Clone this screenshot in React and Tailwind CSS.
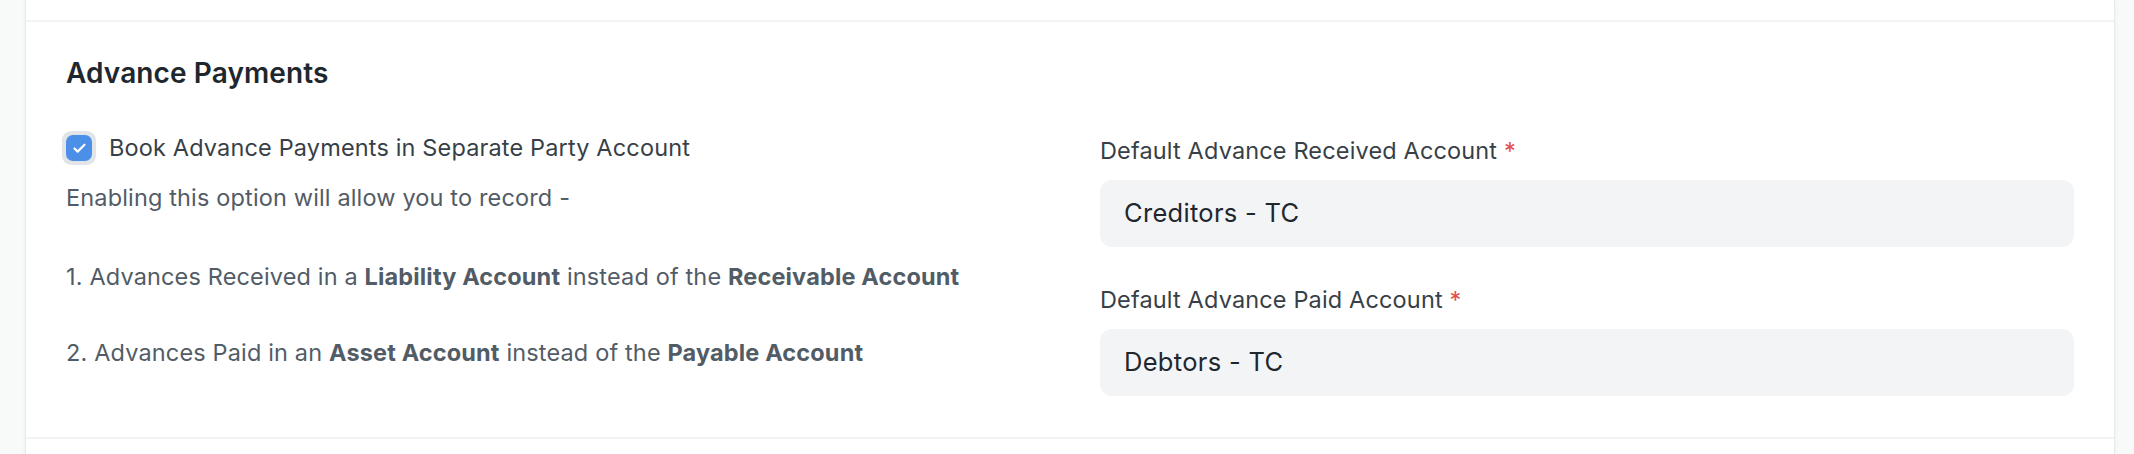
import { Check } from "lucide-react";

function LinkField({ label, value }) {
  return (
    <div className="flex flex-col">
      <label className="text-[23.5px] leading-[34px] tracking-[0.15px] text-[#383f47]">
        {label} <span className="text-[#e24c4c]">*</span>
      </label>
      <div className="mt-[12px] flex items-center h-[67px] rounded-[12px] bg-[#f3f4f5] px-[24px] text-[25.5px] tracking-[0.3px] text-[#1f272e]">
        {value}
      </div>
    </div>
  );
}

export default function App() {
  return (
    <div className="h-[454px] w-full bg-[#f8f9f9] pl-[25px] pr-[19px] font-['Inter',sans-serif]">
      <div className="h-full bg-white border-x border-[#e8eaec] shadow-[0_0_4px_rgba(0,0,0,0.06)]">
        <div className="h-[20px]" />
        <section className="border-y-2 border-[#f3f3f3] px-[40px] pt-[34px] pb-[41px]">
          <h2 className="text-[28px] leading-[34px] font-semibold tracking-[0.1px] text-[#1f272e]">
            Advance Payments
          </h2>
          <div className="grid grid-cols-2 gap-[60px]">
            <div className="flex flex-col pt-[41px]">
              <label className="-ml-[4px] flex items-center gap-[13px] h-[34px] text-[23.5px] tracking-[0.15px] text-[#383f47]">
                <span className="flex items-center justify-center w-[34px] h-[34px] rounded-[9px] bg-[#e2e5e8]">
                  <span className="flex items-center justify-center w-[26px] h-[26px] rounded-[7px] bg-[#4b8fe8]">
                    <Check className="w-[15px] h-[15px] text-white" strokeWidth={3.5} />
                  </span>
                </span>
                Book Advance Payments in Separate Party Account
              </label>
              <div className="text-[23.5px] leading-[34px] tracking-[0.15px] text-[#525c66]">
                <p className="mt-[16px]">Enabling this option will allow you to record -</p>
                <p className="mt-[45px]">
                  1. Advances Received in a <b className="font-bold">Liability Account</b> instead of the{" "}
                  <b className="font-bold">Receivable Account</b>
                </p>
                <p className="mt-[42px]">
                  2. Advances Paid in an <b className="font-bold">Asset Account</b> instead of the{" "}
                  <b className="font-bold">Payable Account</b>
                </p>
              </div>
            </div>
            <div className="flex flex-col pt-[44px] gap-[36px]">
              <LinkField label="Default Advance Received Account" value="Creditors - TC" />
              <LinkField label="Default Advance Paid Account" value="Debtors - TC" />
            </div>
          </div>
        </section>
      </div>
    </div>
  );
}
